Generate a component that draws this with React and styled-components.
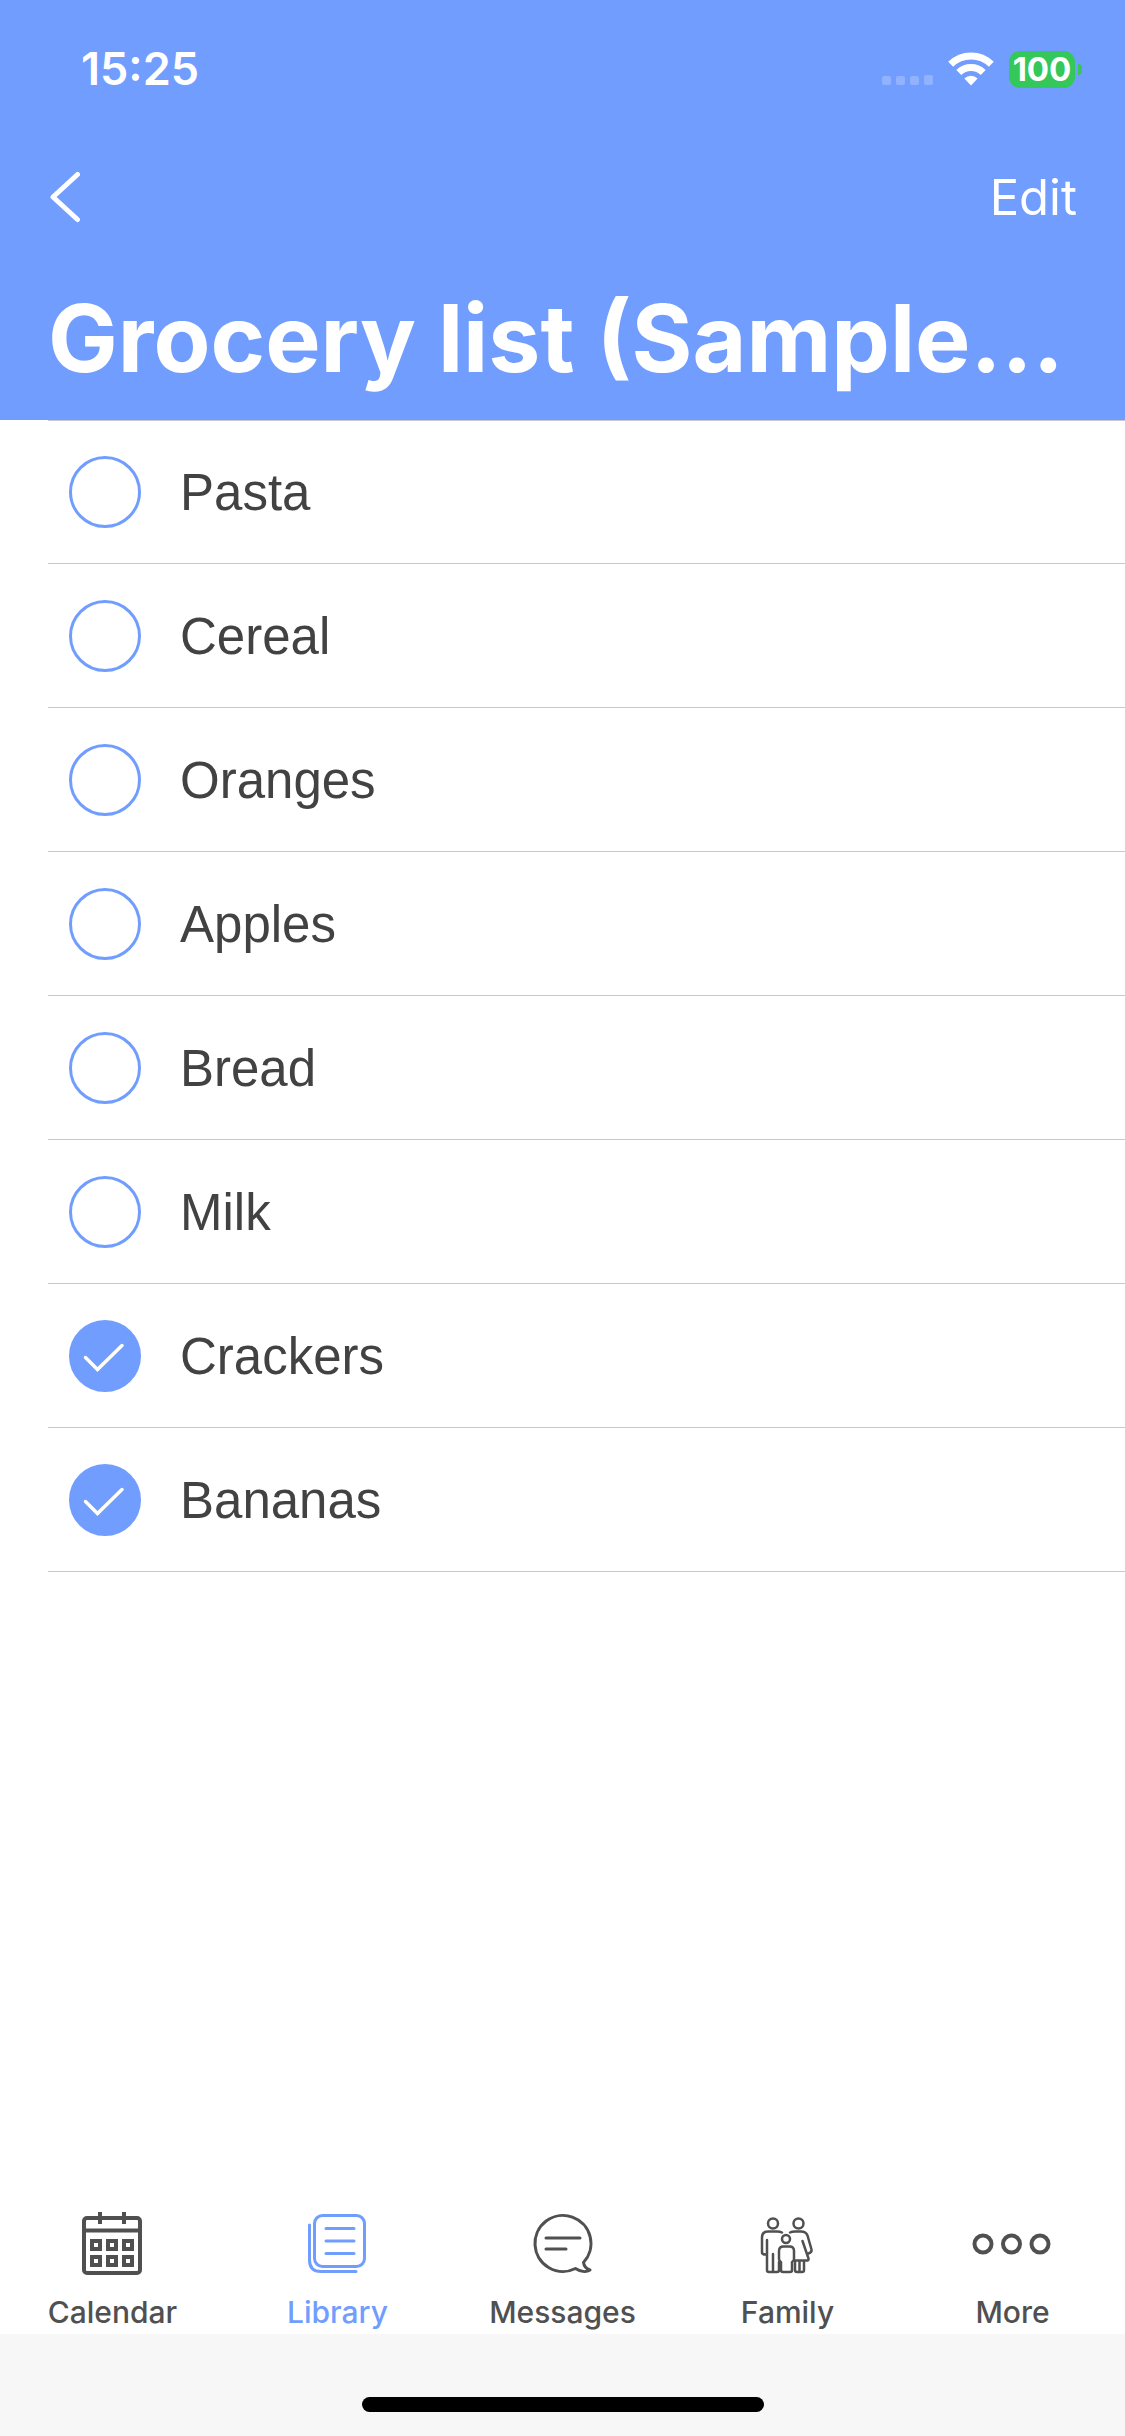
import React, { useState } from 'react';
import styled, { createGlobalStyle } from 'styled-components';

const GlobalStyle = createGlobalStyle`
  * {
    box-sizing: border-box;
  }
  body {
    margin: 0;
    background: #fff;
  }
  button, input {
    font: inherit;
    margin: 0;
  }
`;

const Screen = styled.div`
  display: flex;
  flex-direction: column;
  min-height: 100vh;
  font-family: Inter, "Liberation Sans", sans-serif;
  background: #fff;
`;

const Header = styled.header`
  background: #719dff;
  color: white;
`;

const StatusBar = styled.div`
  display: flex;
  align-items: center;
  justify-content: space-between;
  height: 138px;
  padding: 0 43px 0 81px;
`;

const Time = styled.time`
  font-size: 45px;
  line-height: 52px;
  font-weight: 600;
`;

const StatusIcons = styled.div`
  display: flex;
  align-items: center;
  gap: 15px;
`;

const Battery = styled.div`
  display: flex;
  align-items: center;
  gap: 3px;
`;

const BatteryLevel = styled.span`
  width: 66px;
  height: 37px;
  border-radius: 11px;
  background: #34c759;
  font-size: 33px;
  line-height: 37px;
  font-weight: 700;
  text-align: center;
`;

const BatteryTip = styled.span`
  width: 4px;
  height: 11px;
  border-radius: 0 4px 4px 0;
  background: #34c759;
`;

const NavRow = styled.div`
  display: flex;
  align-items: center;
  justify-content: space-between;
  height: 120px;
  padding: 0 48px;
`;

const NavButton = styled.button`
  display: flex;
  align-items: center;
  padding: 0;
  border: 0;
  background: none;
  color: white;
  font-size: 49px;
  line-height: 60px;
  cursor: pointer;
`;

const Title = styled.h1`
  margin: 0;
  padding: 20px 48px 22px;
  font-size: 93px;
  line-height: 120px;
  font-weight: 700;
  white-space: nowrap;
`;

const List = styled.ul`
  flex: 1;
  margin: 0;
  padding: 0 0 0 48px;
  list-style: none;
`;

const Item = styled.li`
  border-bottom: 1px solid #c8c7cc;

  &:first-child {
    box-shadow: inset 0 1px #c8c7cc;
  }
`;

const ItemLabel = styled.label`
  display: flex;
  align-items: center;
  gap: 39px;
  height: 143px;
  padding-left: 21px;
  font-family: "Liberation Sans", Arial, sans-serif;
  font-size: 51px;
  line-height: 60px;
  color: #424242;
  cursor: pointer;
`;

const ItemName = styled.span`
  padding-top: 3px;
`;

const CheckBox = styled.span`
  display: grid;
  width: 72px;
  height: 72px;

  > * {
    grid-area: 1 / 1;
  }
  svg {
    pointer-events: none;
  }
`;

const CheckInput = styled.input`
  appearance: none;
  width: 72px;
  height: 72px;
  border: 3px solid #719dff;
  border-radius: 50%;
  background: transparent;
  cursor: pointer;

  &:checked {
    background: #719dff;
  }
`;

const TabBar = styled.nav`
  display: grid;
  grid-template-columns: repeat(5, 1fr);
  height: 138px;
`;

const Tab = styled.a`
  display: flex;
  flex-direction: column;
  align-items: center;
  gap: 12px;
  padding-top: 12px;
  font-size: 30px;
  line-height: 40px;
  font-weight: 500;
  text-decoration: none;
  color: ${(props) => (props.$active ? '#719dff' : '#505050')};
`;

const HomeArea = styled.footer`
  display: flex;
  justify-content: center;
  align-items: flex-end;
  height: 102px;
  padding-bottom: 24px;
  background: #f7f7f7;
`;

const HomeIndicator = styled.div`
  width: 402px;
  height: 15px;
  border-radius: 8px;
  background: black;
`;

const SignalIcon = () => (
  <svg width="51" height="37" viewBox="0 0 51 37" fill="#fff" fillOpacity="0.22">
    <rect x="0" y="25" width="9" height="9" rx="2" />
    <rect x="14" y="25" width="9" height="9" rx="2" />
    <rect x="28" y="25" width="9" height="9" rx="2" />
    <rect x="42" y="24" width="9" height="10" rx="2" />
  </svg>
);

const WifiIcon = () => (
  <svg width="46" height="37" viewBox="0 0 46 37" fill="none" stroke="#fff">
    <path d="M2.7 13.2a29 29 0 0 1 40.6 0" strokeWidth="7" />
    <path d="M10.8 21.6a17.4 17.4 0 0 1 24.4 0" strokeWidth="7" />
    <path d="M23 34.5l-6.6-7a9.3 9.3 0 0 1 13.2 0z" fill="#fff" stroke="none" />
  </svg>
);

const BackIcon = () => (
  <svg width="34" height="54" viewBox="0 0 34 54" fill="none" stroke="#fff" strokeWidth="5" strokeLinecap="round" strokeLinejoin="round">
    <path d="M29.5 3.5L5 26l24.5 22.5" />
  </svg>
);

const CheckMark = () => (
  <svg width="72" height="72" viewBox="0 0 72 72" fill="none" stroke="#fff" strokeWidth="3.5" strokeLinecap="round">
    <path d="M16.5 37.5L28.5 49.5L53 25.5" />
  </svg>
);

const TabIcon = ({ children, weight = 3 }) => (
  <svg width="89" height="72" viewBox="0 0 89 72" fill="none" stroke="currentColor" strokeWidth={weight} strokeLinecap="round" strokeLinejoin="round">
    {children}
  </svg>
);

const CalendarIcon = () => (
  <TabIcon weight={4}>
    <rect x="16" y="10" width="56" height="55" rx="3" />
    <path d="M16 22.5h56M32 4v12M56 4v12" strokeLinecap="butt" />
    <g strokeLinejoin="miter">
      <rect x="24" y="33" width="8" height="8" />
      <rect x="40" y="33" width="8" height="8" />
      <rect x="56" y="33" width="8" height="8" />
      <rect x="24" y="49" width="8" height="8" />
      <rect x="40" y="49" width="8" height="8" />
      <rect x="56" y="49" width="8" height="8" />
    </g>
  </TabIcon>
);

const LibraryIcon = () => (
  <TabIcon>
    <rect x="21.5" y="7.5" width="50" height="51" rx="8" />
    <path d="M16.5 17v35q0 11.5 11.5 11.5h35" />
    <path d="M33 20.5h28M33 33h28M33 45.5h28" />
  </TabIcon>
);

const MessagesIcon = () => (
  <TabIcon>
    <path d="M57.5 60.5A28 28 0 1 1 65.5 54.5C66 58 68.5 61 72 62C68 64.5 62 63.5 57.5 60.5Z" />
    <path d="M28 30h34M28 41h20" />
  </TabIcon>
);

const FamilyIcon = () => (
  <TabIcon weight={2.5}>
    <circle cx="30" cy="15.5" r="5" />
    <circle cx="55.5" cy="15.5" r="5" />
    <circle cx="43" cy="31" r="4" />
    <path d="M39 24.5q-2-1-5-1H25q-6 0-6 6v15q0 2 4 2M24 32v30q0 2 2 2h8q2 0 2-2V54M30 46v17" />
    <path d="M47 24.5q2-1 5-1h6q5 0 6.5 4l4 14q.5 3-3 4M59.5 33l6 17.5q.5 2-2 2H52M52 53v9q0 2 2 2h5q2 0 2-2v-9M56.5 53v10" />
    <path d="M40 64q-2 0-2-2v-8q-2-1-2-3v-8q0-4.5 4.5-4.5h6q4.5 0 4.5 4.5v8q0 2-2 3v8q0 2-2 2z" />
  </TabIcon>
);

const MoreIcon = () => (
  <TabIcon weight={4}>
    <circle cx="15" cy="36" r="8.5" />
    <circle cx="43.5" cy="36" r="8.5" />
    <circle cx="72" cy="36" r="8.5" />
  </TabIcon>
);

const tabs = [
  { name: 'Calendar', icon: <CalendarIcon /> },
  { name: 'Library', icon: <LibraryIcon />, active: true },
  { name: 'Messages', icon: <MessagesIcon /> },
  { name: 'Family', icon: <FamilyIcon /> },
  { name: 'More', icon: <MoreIcon /> },
];

const App = () => {
  const [items, setItems] = useState([
    { id: 1, name: 'Pasta', done: false },
    { id: 2, name: 'Cereal', done: false },
    { id: 3, name: 'Oranges', done: false },
    { id: 4, name: 'Apples', done: false },
    { id: 5, name: 'Bread', done: false },
    { id: 6, name: 'Milk', done: false },
    { id: 7, name: 'Crackers', done: true },
    { id: 8, name: 'Bananas', done: true },
  ]);

  const toggle = (id) => {
    setItems(items.map((item) => (item.id === id ? { ...item, done: !item.done } : item)));
  };

  return (
    <Screen>
      <GlobalStyle />
      <Header>
        <StatusBar>
          <Time>15:25</Time>
          <StatusIcons>
            <SignalIcon />
            <WifiIcon />
            <Battery>
              <BatteryLevel>100</BatteryLevel>
              <BatteryTip />
            </Battery>
          </StatusIcons>
        </StatusBar>
        <NavRow>
          <NavButton type="button" aria-label="Back">
            <BackIcon />
          </NavButton>
          <NavButton type="button">Edit</NavButton>
        </NavRow>
        <Title>Grocery list (Sample...</Title>
      </Header>
      <List>
        {items.map((item) => (
          <Item key={item.id}>
            <ItemLabel htmlFor={`item-${item.id}`}>
              <CheckBox>
                <CheckInput
                  type="checkbox"
                  id={`item-${item.id}`}
                  checked={item.done}
                  onChange={() => toggle(item.id)}
                />
                {item.done && <CheckMark />}
              </CheckBox>
              <ItemName>{item.name}</ItemName>
            </ItemLabel>
          </Item>
        ))}
      </List>
      <TabBar>
        {tabs.map((tab) => (
          <Tab key={tab.name} href="#" $active={tab.active}>
            {tab.icon}
            {tab.name}
          </Tab>
        ))}
      </TabBar>
      <HomeArea>
        <HomeIndicator />
      </HomeArea>
    </Screen>
  );
};

export default App;
